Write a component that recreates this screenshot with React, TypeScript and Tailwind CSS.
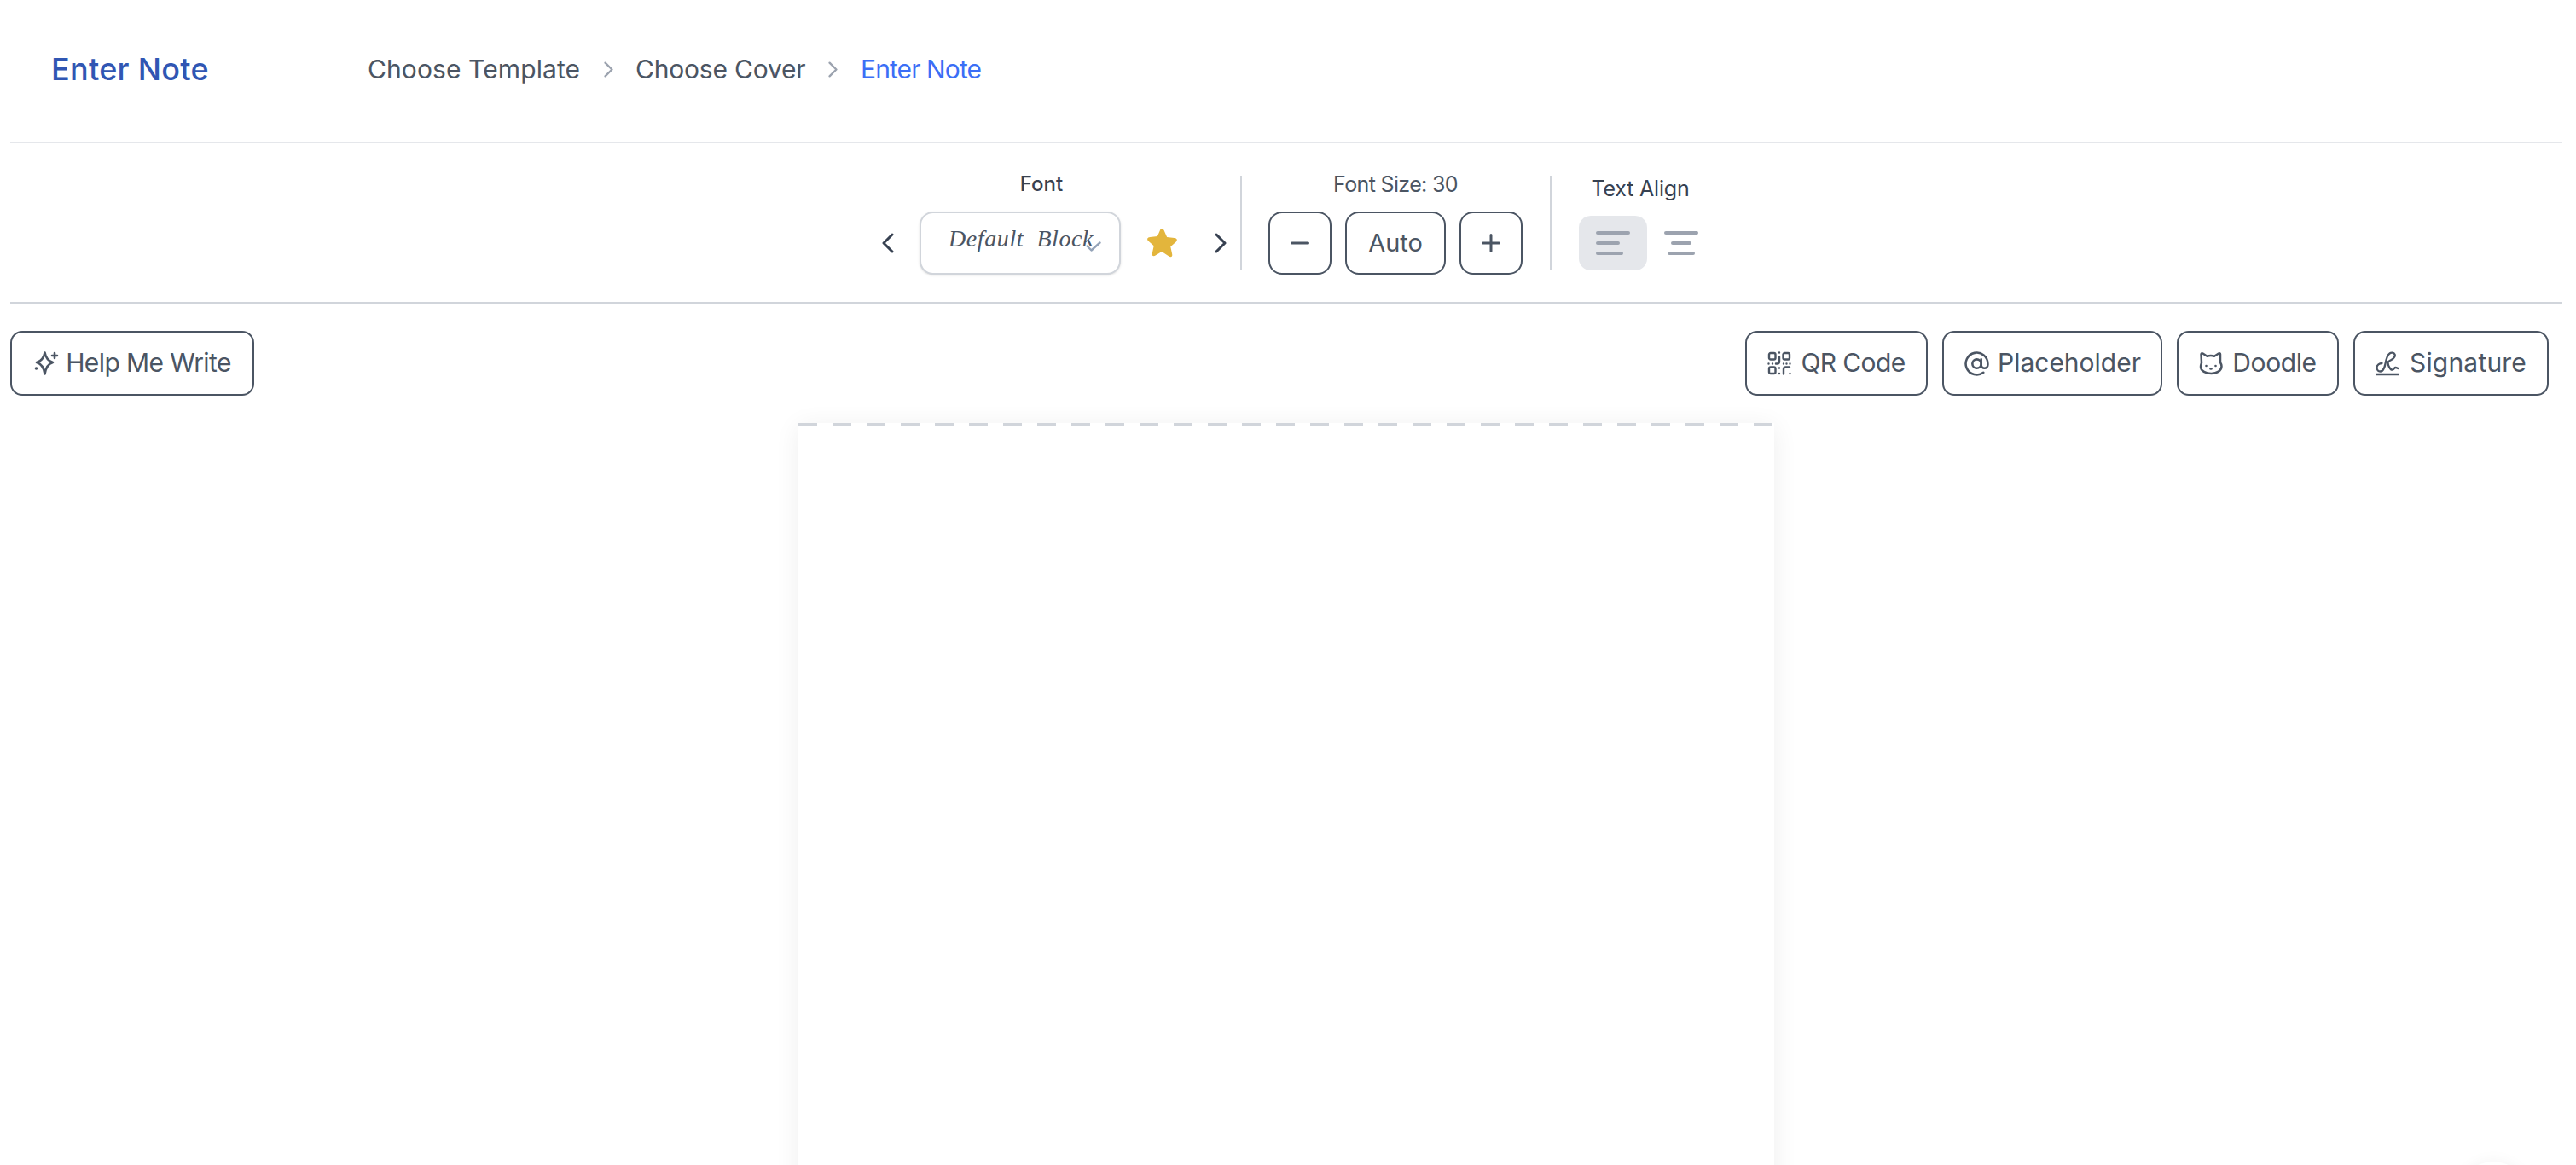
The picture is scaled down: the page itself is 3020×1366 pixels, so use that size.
import React from "react";

const sans = "font-['Inter','Liberation_Sans',sans-serif]";

function Chevron({ dir, cls }: { dir: "l" | "r"; cls: string }) {
  return (
    <svg viewBox="0 0 14 24" className={cls} fill="none" stroke="currentColor" strokeWidth={3} strokeLinecap="round" strokeLinejoin="round">
      <path d={dir === "l" ? "M12 2 2 12l10 10" : "M2 2l10 10L2 22"} />
    </svg>
  );
}

function QrIcon() {
  return (
    <svg viewBox="0 0 28 28" className="w-[28px] h-[28px]" fill="none" stroke="currentColor" strokeWidth={2.4} strokeLinecap="round" strokeLinejoin="round">
      <rect x="2" y="2" width="7.500" height="7.500" rx="1.800" />
      <rect x="18.500" y="2" width="7.500" height="7.500" rx="1.800" />
      <rect x="2" y="18.500" width="7.500" height="7.500" rx="1.800" />
      <path d="M14 1.500v0M14 6.500v5.500c0 1.500-1 2.500-2.500 2.500H10M1.500 14.500h0M6 14.500h0M19 14.500h0M22.500 14.500h0M26.500 14.500h0M14 19.500v0M14 26v0M19 26.500v-5.500c0-1.500 1-2.500 2.500-2.500H26M26.500 26v0" />
    </svg>
  );
}

function CatIcon() {
  return (
    <svg viewBox="0 0 28 28" className="w-[28px] h-[28px]" fill="none" stroke="currentColor" strokeWidth={2.500} strokeLinecap="round" strokeLinejoin="round">
      <path d="M2.500 3.500c0-1 1-1.500 2-1l5 3.200c2.800-.9 5.700-.9 8.500 0l5-3.200c1-.5 2-.1 2 1v9.500c1 1.500 1.500 3 1.500 4.500 0 5-5.500 8.500-12 8.500S2 23 2 18c0-1.500.5-3 1-4.500z" />
      <circle cx="8.500" cy="17" r="1.300" fill="currentColor" stroke="none" />
      <circle cx="19.500" cy="17" r="1.300" fill="currentColor" stroke="none" />
      <ellipse cx="14" cy="20.500" rx="1.800" ry="1.300" fill="currentColor" stroke="none" />
    </svg>
  );
}

function SignatureIcon() {
  return (
    <svg viewBox="0 0 28 29" className="w-[28px] h-[29px]" fill="none" stroke="currentColor" strokeWidth={2.300} strokeLinecap="round" strokeLinejoin="round">
      <path d="M1 27h26" strokeWidth={2.700} />
      <path d="M7.500 14c-3 0-6 2-6 5s2 4.500 4 4.500c3 0 5-4 6-9s2-10 5-12c2-1.500 5-1 6 1s-1 5-4 6.500c-2 1-4 1.500-4 3.500s2.500 9 5.500 8c2-.7 2-2.500 3.500-2.500s2 1 3 1" />
    </svg>
  );
}

function SparkleIcon() {
  return (
    <svg viewBox="0 0 30 30" className="w-[30px] h-[30px]" fill="none" stroke="currentColor" strokeWidth={2.600} strokeLinecap="round" strokeLinejoin="round">
      <path d="M13.500 2.500c1.200 6.500 4 10 9.500 11.500-5.500 1.500-8.300 5.500-9.500 13.500-1.200-8-4-12-9.500-13.500 5.500-1.500 8.300-5 9.500-11.500z" />
      <path d="M25 3v6M22 6h6" />
      <circle cx="3.500" cy="21" r="1.800" fill="currentColor" stroke="none" />
    </svg>
  );
}

function ActionButton({ icon, label, cls, textCls }: { icon: React.ReactNode; label: string; cls: string; textCls: string }) {
  return (
    <button className={`h-[76px] rounded-[14px] border-2 border-[#4b5563] text-[#4b5563] flex items-center justify-center bg-white ${cls}`}>
      {icon}
      <span className={`text-[30px] leading-none whitespace-nowrap font-[430] pb-[3px] ${textCls}`}>{label}</span>
    </button>
  );
}

export default function App() {
  return (
    <div className={`relative w-full h-[1366px] overflow-hidden bg-white ${sans}`}>
      <header className="ml-[12px] mr-[16px] h-[168px] border-b-2 border-[#e5e7eb] flex items-center pb-[4px]">
        <h1 className="ml-[48px] w-[371px] text-[36px] font-medium text-[#3056b3] leading-none tracking-[0.3px]">Enter Note</h1>
        <nav className="flex items-center text-[30px] leading-none text-[#4b5563] font-[430]">
          <span className="w-[250px] whitespace-nowrap tracking-[0.1px]">Choose Template</span>
          <Chevron dir="r" cls="ml-[27px] w-[11px] h-[21px] text-[#9ca3af]" />
          <span className="ml-[26px] w-[199px] whitespace-nowrap tracking-[-0.2px]">Choose Cover</span>
          <Chevron dir="r" cls="ml-[27px] w-[11px] h-[21px] text-[#9ca3af]" />
          <span className="ml-[27px] text-[#3b6ef6] whitespace-nowrap tracking-[-0.9px]">Enter Note</span>
        </nav>
      </header>

      <section className="ml-[12px] mr-[16px] h-[188px] border-b-2 border-[#d1d5db] pl-[1022px] flex items-start">
        <div className="w-[404px] pt-[33px] flex flex-col">
          <div className="text-[24px] leading-[30px] font-medium text-[#374151] text-center pr-[30px]">Font</div>
          <div className="mt-[17px] flex items-center h-[74px]">
            <Chevron dir="l" cls="w-[14px] h-[24px] text-[#374151]" />
            <div className="relative ml-[30px] w-[236px] h-[74px] rounded-[16px] border-2 border-[#d1d5db] shadow-sm bg-white">
              <span className="absolute left-[32px] top-[10px] text-[#4b5563] text-[28px] leading-[40px] italic whitespace-nowrap font-['Liberation_Serif',serif] tracking-[0.6px]">Default&nbsp; Block</span>
              <svg viewBox="0 0 18 12" className="absolute left-[193px] top-[33px] w-[18px] h-[12px] text-[#94a3b8]" fill="none" stroke="currentColor" strokeWidth={2.400} strokeLinecap="round" strokeLinejoin="round">
                <path d="M1.500 5.500 6.500 10.500 16.500 1.500" />
              </svg>
            </div>
            <svg viewBox="0 0 38 36" className="ml-[29px] w-[38px] h-[36px] text-[#e3b53c]" fill="currentColor">
              <path d="M19 1c1.200 0 2 .8 2.600 2l3.500 8 8.700.9c3 .3 4 2.500 2 4.500l-6.500 5.900 1.900 8.600c.6 2.900-1.300 4.100-3.800 2.700L19 28l-7.400 4.600c-2.500 1.400-4.400.2-3.800-2.700l1.900-8.600-6.500-5.900c-2-2-1-4.200 2-4.500l8.700-.9 3.500-8C17 1.800 17.800 1 19 1z" />
            </svg>
            <Chevron dir="r" cls="ml-[43px] w-[14px] h-[24px] text-[#374151]" />
          </div>
        </div>

        <div className="ml-[16px] mt-[38px] h-[110px] w-[2px] bg-[#d1d5db]" />

        <div className="ml-[31px] w-[298px] pt-[33px] flex flex-col">
          <div className="text-[25px] leading-[30px] text-[#4b5563] text-center whitespace-nowrap tracking-[-0.65px] font-[430]">Font Size: 30</div>
          <div className="mt-[17px] flex items-center gap-[16px] h-[74px] text-[#4b5563]">
            <button className="w-[74px] h-[74px] rounded-[16px] border-2 border-[#4b5563] flex items-center justify-center">
              <svg viewBox="0 0 22 4" className="w-[22px] h-[4px]" stroke="currentColor" strokeWidth={3} strokeLinecap="round"><path d="M1.500 2h19" /></svg>
            </button>
            <button className="w-[118px] h-[74px] rounded-[16px] border-2 border-[#4b5563] text-[29px] leading-none font-normal pb-[2px]">Auto</button>
            <button className="w-[74px] h-[74px] rounded-[16px] border-2 border-[#4b5563] flex items-center justify-center">
              <svg viewBox="0 0 22 22" className="w-[22px] h-[22px]" stroke="currentColor" strokeWidth={3} strokeLinecap="round"><path d="M1.500 11h19M11 1.500v19" /></svg>
            </button>
          </div>
        </div>

        <div className="ml-[32px] mt-[38px] h-[110px] w-[2px] bg-[#d1d5db]" />

        <div className="ml-[32px] w-[140px] pt-[38px] flex flex-col">
          <div className="text-[25px] leading-[30px] text-[#374151] text-center whitespace-nowrap tracking-[-0.2px] font-[430] translate-x-[2px]">Text Align</div>
          <div className="mt-[17px] flex items-center gap-[20px]">
            <div className="w-[80px] h-[64px] rounded-[14px] bg-[#e5e7eb] flex flex-col items-start justify-center gap-[8px] pl-[20px]">
              <span className="block w-[40px] h-[4px] rounded-full bg-[#9ca3af]" />
              <span className="block w-[28px] h-[4px] rounded-full bg-[#9ca3af]" />
              <span className="block w-[32px] h-[4px] rounded-full bg-[#9ca3af]" />
            </div>
            <div className="w-[40px] h-[64px] flex flex-col items-center justify-center gap-[8px]">
              <span className="block w-[40px] h-[4px] rounded-full bg-[#9ca3af]" />
              <span className="block w-[24px] h-[4px] rounded-full bg-[#9ca3af]" />
              <span className="block w-[32px] h-[4px] rounded-full bg-[#9ca3af]" />
            </div>
          </div>
        </div>
      </section>

      <section className="ml-[12px] mr-[32px] mt-[32px] flex items-center justify-between">
        <ActionButton cls="w-[286px] gap-[8px]" textCls="tracking-[-0.6px]" icon={<SparkleIcon />} label="Help Me Write" />
        <div className="flex items-center gap-[17px]">
          <ActionButton cls="w-[214px] gap-[11px]" textCls="tracking-[-0.6px]" icon={<QrIcon />} label="QR Code" />
          <ActionButton cls="w-[258px] gap-[9px]" textCls="tracking-[0px]" icon={<svg viewBox="0 0 24 24" className="w-[31px] h-[31px]" fill="none" stroke="currentColor" strokeWidth={2} strokeLinecap="round" strokeLinejoin="round"><circle cx="12" cy="12" r="4" /><path d="M16 8v5a3 3 0 0 0 6 0v-1a10 10 0 1 0-4 8" /></svg>} label="Placeholder" />
          <ActionButton cls="w-[190px] gap-[11px]" textCls="tracking-[-0.4px]" icon={<CatIcon />} label="Doodle" />
          <ActionButton cls="w-[229px] gap-[12px]" textCls="tracking-[0.2px]" icon={<SignatureIcon />} label="Signature" />
        </div>
      </section>

      <div className="mt-[32px] ml-[936px] w-[1144px] h-[1000px] bg-white shadow-[0_4px_28px_rgba(0,0,0,0.07)] relative">
        <svg viewBox="0 0 1144 4" className="absolute left-0 top-0 w-[1144px] h-[4px]">
          <line x1="0" y1="2" x2="1144" y2="2" stroke="#d1d5db" strokeWidth={4} strokeDasharray="22 18" />
        </svg>
      </div>

      <div className="absolute left-[2883px] top-[1362px] w-[80px] h-[80px] rounded-full bg-white shadow-[0_0_18px_rgba(0,0,0,0.05)]" />
    </div>
  );
}
